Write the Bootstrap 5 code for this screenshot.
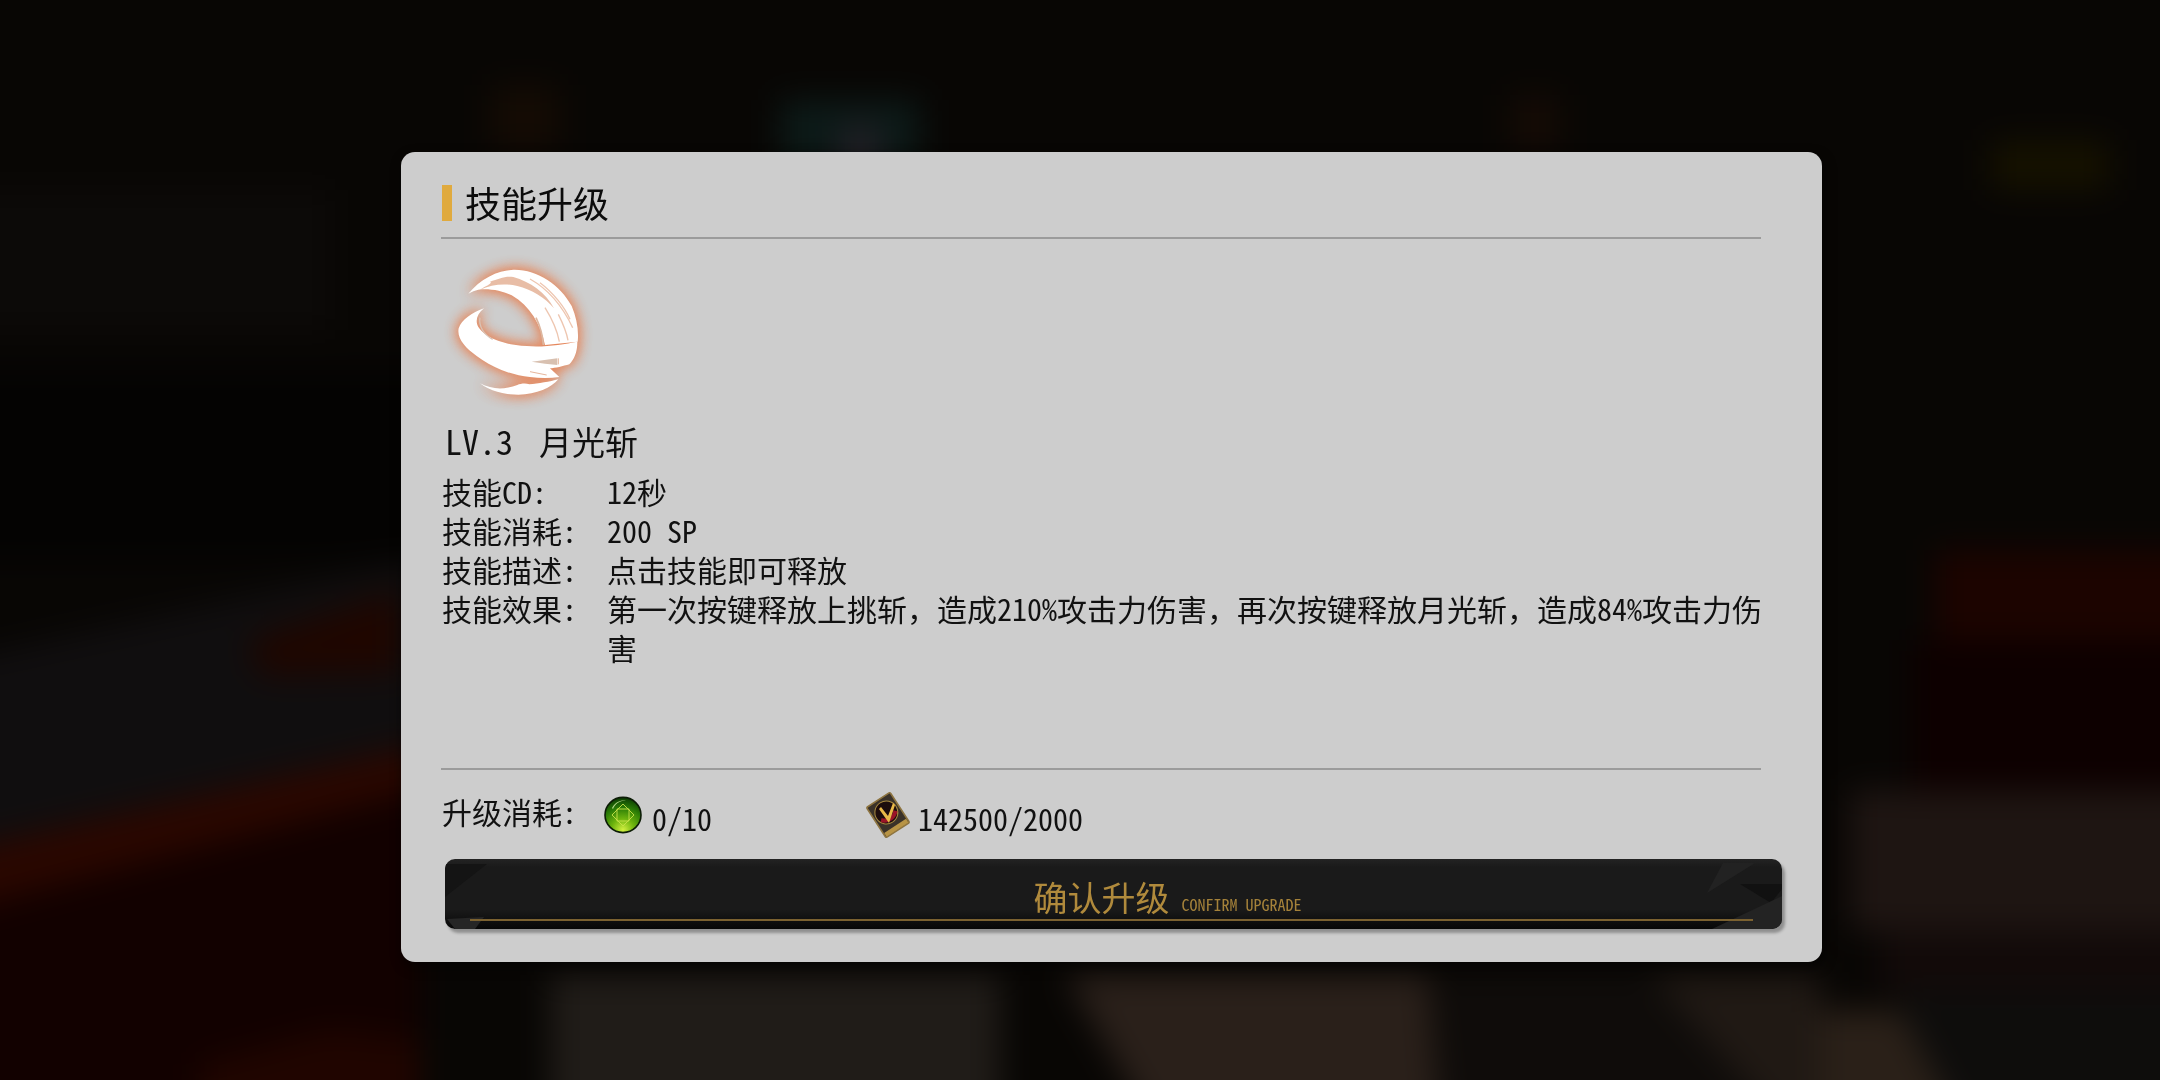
<!DOCTYPE html>
<html lang="zh-CN">
<head>
  <meta charset="UTF-8" />
  <title>技能升级</title>
  <link href="https://cdn.jsdelivr.net/npm/bootstrap@5.3.3/dist/css/bootstrap.min.css" rel="stylesheet" />
  <style>
    html, body { height: 100%; }
    body {
      --mono: "Noto Sans Mono CJK SC", "Noto Sans CJK SC", "Liberation Mono", monospace;
      overflow: hidden;
      font-family: var(--mono);
      color: #111;
      background-color: #080604;
    }
    .scene-bg { position: fixed; left: 0; top: 0; z-index: -1; }
    .skill-panel {
      width: 1421px;
      height: 810px;
      margin: 152px 0 0 401px;
      padding: 33px 61px 0 40px;
      background: #cdcdcd;
      border: 0;
      border-radius: 14px;
      box-shadow: 2px 5px 12px rgba(0,0,0,.55);
    }
    .skill-head { height: 36px; padding-left: 1px; gap: 13px; font-size: 36px; line-height: 34px; color: #0c0c0c; }
    .skill-head i { display: block; width: 10px; height: 36px; background: #e0aa3e; }
    .skill-head span { padding-bottom: 2px; }
    .rule-line { height: 2px; background: #9b9b9b; }
    .skill-icon { display: block; width: 170px; height: 170px; margin: 12px 0 0 -11px; }
    .skill-name { padding-left: 4px; font-size: 33px; line-height: 40px; }
    .lv-tag { margin-right: 26px; font-size: 34px; }
    .info-row { margin-right: -4px; font-size: 30px; line-height: 39px; padding-left: 1px; }
    .info-first { margin-top: 11px; }
    .info-key { flex: 0 0 165px; white-space: pre; }
    .info-gap { margin-top: 101px; }
    .cost-row { height: 46px; margin-top: 22px; font-size: 30px; line-height: 39px; padding-left: 1px; }
    .cost-key { flex: 0 0 162px; margin-top: -8px; }
    .cost-val { flex: 0 0 262px; gap: 10px; }
    .cost-val svg { flex: none; }
    .cost-val span { padding-top: 7px; }
    .cost-val + .cost-val { gap: 8px; }
    .up-btn {
      width: 1337px;
      height: 70px;
      margin: 21px 0 0 4px;
      padding: 0;
      border: 0;
      border-radius: 10px;
      background: linear-gradient(#232323 0, #1a1a1a 8px, #1a1a1a 72%, #070707 100%);
      box-shadow: 3px 4px 3px rgba(0,0,0,.3);
      color: #b08a3c;
      overflow: hidden;
    }
    .up-btn:hover, .up-btn:active { background: #1a1a1a; color: #b08a3c; }
    .up-btn svg { position: absolute; left: 0; top: 0; }
    .up-label { margin: 13px 0 0 108px; font-size: 34px; line-height: 50px; }
    .up-sub { margin: 35px 0 0 12px; font-size: 16px; line-height: 20px; color: #a5823a; }
    .up-line { position: absolute; left: 25px; right: 29px; bottom: 8px; height: 2px; background: #7b6130; }
  </style>
</head>
<body>

  <!-- blurred game scene behind the dialog -->
  <svg class="scene-bg" width="2160" height="1080" viewBox="0 0 2160 1080">
    <defs>
      <filter id="blurBig" x="-10%" y="-10%" width="120%" height="120%" color-interpolation-filters="sRGB"><feGaussianBlur stdDeviation="16" /></filter>
    </defs>
    <g filter="url(#blurBig)">
      <rect x="-40" y="-40" width="2240" height="1160" fill="#080604" />
      <path d="M-40 190H330V330H-40Z" fill="#0c0a08" />
      <path d="M-40 370H420V560H-40Z" fill="#040302" />
      <path d="M-40 660L420 560V770L-40 860Z" fill="#100e0f" />
      <path d="M-40 860L420 760V1120H-40Z" fill="#120100" />
      <path d="M-40 850L420 745V790L-40 910Z" fill="#2a0700" />
      <path d="M250 640L400 590V672L260 675Z" fill="#1f0600" />
      <path d="M200 1065L330 1030L420 1040V1120H200Z" fill="#200500" />
      <path d="M1935 550H2200V640H1935Z" fill="#1c0400" />
      <path d="M1910 640H2200V790H1910Z" fill="#0d0000" />
      <path d="M1850 790H2200V930H1850Z" fill="#1e1512" />
      <path d="M1880 930H2200V990H1880Z" fill="#120a09" />
      <path d="M1900 990H2200V1120H1900Z" fill="#0e0d0c" />
      <path d="M1820 1010H1900L1960 1120H1820Z" fill="#2a2018" />
      <path d="M1990 140H2110V190H1990Z" fill="#151100" />
      <path d="M550 975H1000V1120H550Z" fill="#201c18" />
      <path d="M1065 975H1430L1440 1120H1150Z" fill="#2a201a" />
      <path d="M1440 975H1700L1820 1120H1440Z" fill="#0f0c0a" />
      <path d="M1650 975H1820V1120H1780Z" fill="#201914" />
      <path d="M780 100H920V160H780Z" fill="#0c1a18" />
      <path d="M840 125H880V175H840Z" fill="#201e24" />
      <path d="M490 85H560V150H490Z" fill="#140b04" />
      <path d="M1510 95H1560V150H1510Z" fill="#150b05" />
    </g>
  </svg>

  <div class="card skill-panel">
    <div class="d-flex align-items-center skill-head"><i></i><span>技能升级</span></div>
    <div class="rule-line mt-3"></div>

    <svg class="skill-icon" viewBox="0 0 510 510">
      <defs>
        <filter id="glow" x="-25%" y="-25%" width="150%" height="150%" color-interpolation-filters="sRGB">
          <feGaussianBlur in="SourceAlpha" stdDeviation="20" result="soft" />
          <feFlood flood-color="#e5875c" flood-opacity="1" />
          <feComposite in2="soft" operator="in" result="halo" />
          <feMerge><feMergeNode in="halo" /><feMergeNode in="halo" /><feMergeNode in="SourceGraphic" /></feMerge>
        </filter>
      </defs>
      <g filter="url(#glow)">
        <path fill="#fff" d="M115 128C150 85 200 58 250 56C320 54 390 100 425 165C440 200 447 240 443 272L345 282C332 220 300 165 245 133C215 118 175 112 145 116C135 118 125 122 115 128Z" />
        <path fill="#fff" d="M162 172C125 186 95 205 86 232C80 262 105 290 140 315C185 348 240 372 300 378C330 382 360 382 388 378L360 352C375 352 400 345 418 340C432 325 442 305 442 272C400 280 340 290 290 285C230 282 170 265 145 228C135 210 140 190 162 172Z" />
        <path fill="#fff" d="M150 397C185 415 220 418 262 402C272 398 286 396 298 400C325 398 360 392 385 385C365 410 320 430 265 431C220 431 180 420 150 397Z" />
      </g>
      <path fill="#e8bda6" d="M150 116C185 100 225 96 262 105C305 116 345 140 372 172C348 125 300 92 250 78C225 74 205 84 180 92C190 96 170 104 150 116Z" />
      <path fill="none" stroke="#eec6b0" stroke-width="4" d="M300 84C350 112 395 160 428 230M330 95C370 125 405 170 420 205M345 170C370 210 382 240 388 272M385 190C400 220 410 245 414 268" />
      <path fill="none" stroke="#ddb7a0" stroke-width="5" d="M318 200C330 225 338 250 340 282" />
      <path fill="none" stroke="#d9c3b5" stroke-width="4" d="M150 200C146 225 160 250 188 265" />
      <path fill="#d8c0b0" d="M305 332L382 322L382 342L345 338Z" />
      <path fill="none" stroke="#e6b69c" stroke-width="3" d="M385 322V340M350 372L300 362" />
    </svg>

    <div class="skill-name"><span class="lv-tag">LV.3</span>月光斩</div>

    <div class="d-flex info-row info-first"><div class="info-key">技能CD:</div><div>12秒</div></div>
    <div class="d-flex info-row"><div class="info-key">技能消耗:</div><div>200 SP</div></div>
    <div class="d-flex info-row"><div class="info-key">技能描述:</div><div>点击技能即可释放</div></div>
    <div class="d-flex info-row"><div class="info-key">技能效果:</div><div>第一次按键释放上挑斩，造成210%攻击力伤害，再次按键释放月光斩，造成84%攻击力伤害</div></div>

    <div class="rule-line info-gap"></div>

    <div class="d-flex align-items-center cost-row">
      <div class="cost-key">升级消耗:</div>
      <div class="d-flex align-items-center cost-val">
        <svg width="38" height="38" viewBox="0 0 38 38">
          <defs>
            <radialGradient id="orb" cx=".5" cy=".92" r=".9">
              <stop offset="0" stop-color="#d2f040" />
              <stop offset=".35" stop-color="#6eb40e" />
              <stop offset=".7" stop-color="#2a7c06" />
              <stop offset="1" stop-color="#0d4003" />
            </radialGradient>
          </defs>
          <ellipse cx="19" cy="19" rx="18" ry="17.6" fill="url(#orb)" stroke="#0c1c06" stroke-width="1.6" />
          <path d="M8 12C11 6 17 4 22 4C15 5 11 8 9 13Z" fill="#d5f3a8" opacity=".8" />
          <g fill="none" stroke="#c7e24a" stroke-width=".9">
            <path d="M19 8L30 19L19 30L8 19Z" />
            <path d="M13 13H25V25H13Z" />
          </g>
        </svg>
        <span>0/10</span>
      </div>
      <div class="d-flex align-items-center cost-val">
        <svg width="44" height="46" viewBox="0 0 44 46">
          <g transform="rotate(-33 22 23)">
            <rect x="8" y="5" width="28" height="36" rx="1.5" fill="#3a3229" stroke="#8d7440" stroke-width="1.6" />
            <rect x="9" y="36" width="26" height="4.5" fill="#b89445" />
            <circle cx="22" cy="20" r="11.5" fill="#1d0d0d" stroke="#a8893f" stroke-width="1" />
            <path d="M12 25C17 31 27 31 32 25L29 22C25 27 19 27 15 22Z" fill="#9a1427" />
          </g>
          <path d="M15 15L22 24L27 11L29 13L23 31L13 17Z" fill="#e9b948" />
        </svg>
        <span>142500/2000</span>
      </div>
    </div>

    <button type="button" class="btn position-relative d-flex justify-content-center align-items-start up-btn">
      <svg width="1337" height="70" viewBox="0 0 1337 70">
        <path d="M0 38L42 5H0Z" fill="#141414" />
        <path d="M2 60L39 58L30 70H10Z" fill="#262626" />
        <path d="M1262 34L1278 4H1310Z" fill="#222" />
        <path d="M1295 25H1337V30L1326 44Z" fill="#111" />
        <path d="M1267 70L1337 37V70Z" fill="#232323" />
      </svg>
      <span class="up-label position-relative">确认升级</span>
      <span class="up-sub position-relative">CONFIRM UPGRADE</span>
      <span class="up-line"></span>
    </button>
  </div>

  <script src="https://cdn.jsdelivr.net/npm/bootstrap@5.3.3/dist/js/bootstrap.bundle.min.js"></script>
</body>
</html>
